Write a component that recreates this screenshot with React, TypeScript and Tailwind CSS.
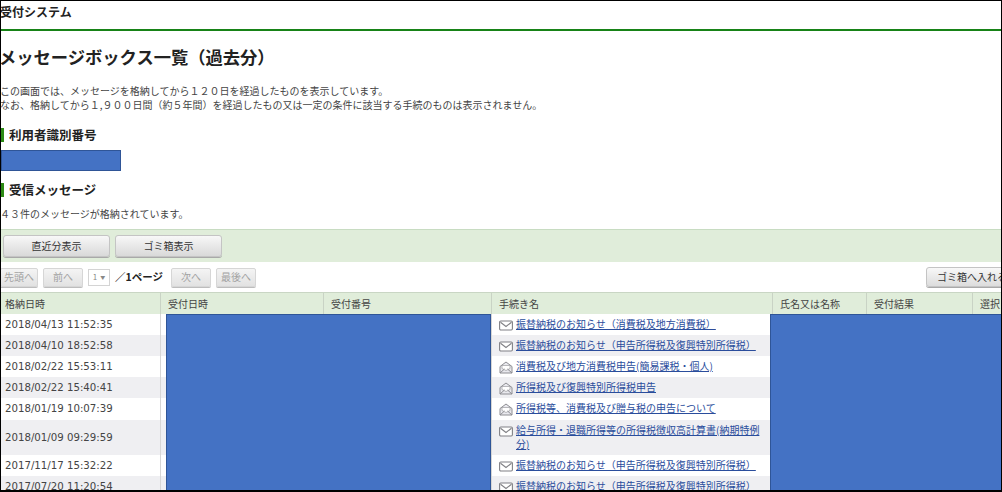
const jp = '"Noto Sans CJK JP", sans-serif';

const rows = [
  { date: "2018/04/13 11:52:35", name: "振替納税のお知らせ（消費税及地方消費税）", open: false, h: "h-[21px]" },
  { date: "2018/04/10 18:52:58", name: "振替納税のお知らせ（申告所得税及復興特別所得税）", open: false, h: "h-[21px]" },
  { date: "2018/02/22 15:53:11", name: "消費税及び地方消費税申告(簡易課税・個人)", open: true, h: "h-[21px]" },
  { date: "2018/02/22 15:40:41", name: "所得税及び復興特別所得税申告", open: true, h: "h-[21px]" },
  { date: "2018/01/19 10:07:39", name: "所得税等、消費税及び贈与税の申告について", open: true, h: "h-[22px]" },
  { date: "2018/01/09 09:29:59", name: "給与所得・退職所得等の所得税徴収高計算書(納期特例分)", open: false, h: "h-[35px]" },
  { date: "2017/11/17 15:32:22", name: "振替納税のお知らせ（申告所得税及復興特別所得税）", open: false, h: "h-[21px]" },
  { date: "2017/07/20 11:20:54", name: "振替納税のお知らせ（申告所得税及復興特別所得税）", open: false, h: "h-[21px]" },
];

function MailIcon({ open }: { open: boolean }) {
  if (open) {
    return (
      <svg width="14" height="13" viewBox="0 0 14 13" className="mt-[2px] shrink-0" fill="#e9e9ee" stroke="#8d8d92" strokeWidth="1">
        <path d="M1 5.500 7 1l6 4.500V12H1z" />
        <path d="M3 4.500h8v3L7 9.500 3 7.500z" fill="#fff" strokeWidth="0.600" />
        <path d="M1 12l4.500-4M13 12 8.500 8" />
      </svg>
    );
  }
  return (
    <svg width="14" height="11" viewBox="0 0 14 11" className="mt-[3px] shrink-0" fill="#fff" stroke="#808085" strokeWidth="1.100">
      <rect x="0.600" y="1" width="12.800" height="9" rx="1.200" />
      <path d="M1.500 2.200 7 6.500l5.500-4.300" fill="none" />
    </svg>
  );
}

function PageBtn({ label, className }: { label: string; className: string }) {
  return (
    <button className={`h-[19px] rounded-[2px] border border-[#d6d6d6] bg-gradient-to-b from-[#f4f4f4] to-[#e2e2e2] text-[10px] leading-none text-[#a2a2a2] shadow-[0_1px_0_#bdbdbd] ${className}`}>
      {label}
    </button>
  );
}

function MainBtn({ label, className }: { label: string; className: string }) {
  return (
    <button className={`h-[22px] rounded-[3px] border border-[#c4c4c4] bg-gradient-to-b from-[#f8f8f8] to-[#d9d9d9] text-[10px] leading-none text-[#333] shadow-[0_1px_0_#a9a9a9] ${className}`}>
      {label}
    </button>
  );
}

function SectionTitle({ children, className }: { children: string; className: string }) {
  return (
    <h2 className={`flex h-[14px] items-center border-l-[3px] border-[#2c8a14] pl-[5px] text-[12.500px] font-bold leading-none text-[#222] ${className}`}>
      {children}
    </h2>
  );
}

export default function App() {
  return (
    <div
      className="relative h-[492px] w-[1002px] overflow-hidden border-b-2 border-l border-r border-t border-black bg-white text-[#333]"
      style={{ fontFamily: jp }}
    >
      <header className="h-[30px] border-b-2 border-[#178317] pt-[4px]">
        <div className="-ml-px text-[12px] font-bold leading-[14px] text-[#222]">受付システム</div>
      </header>

      <h1 className="-ml-[2px] mt-[14px] text-[17.300px] font-bold leading-[24px] text-[#222]">メッセージボックス一覧（過去分）</h1>

      <p className="-ml-px mt-[15px] whitespace-nowrap text-[10px] leading-[14px] text-[#444]">
        この画面では、メッセージを格納してから１２０日を経過したものを表示しています。
        <br />
        なお、格納してから１,９００日間（約５年間）を経過したもの又は一定の条件に該当する手続のものは表示されません。
      </p>

      <SectionTitle className="mt-[16px]">利用者識別番号</SectionTitle>
      <div className="mt-[8px] h-[21px] w-[120px] border border-[#2f5597] bg-[#4472c4]" />
      <SectionTitle className="mt-[12px]">受信メッセージ</SectionTitle>
      <p className="-ml-px mt-[10px] text-[10px] leading-[14px] text-[#444]">４３件のメッセージが格納されています。</p>

      <div className="mt-[8px] flex h-[33px] items-center gap-[5px] border-t border-[#c8dcc2] bg-[#e0edda] pl-[2px]">
        <MainBtn label="直近分表示" className="w-[107px]" />
        <MainBtn label="ゴミ箱表示" className="w-[107px]" />
      </div>

      <div className="relative flex h-[30px] items-center">
        <PageBtn label="先頭へ" className="-ml-px w-[38px]" />
        <PageBtn label="前へ" className="ml-[5px] w-[40px]" />
        <div className="ml-[5px] flex h-[17px] w-[22px] items-center justify-center gap-[3px] border border-[#d4d4d4] text-[8px] text-[#888]">
          1<span className="text-[5px]">▼</span>
        </div>
        <span className="ml-[5px] w-[48px] whitespace-nowrap text-[10.500px] font-bold text-[#222]">／1ページ</span>
        <PageBtn label="次へ" className="ml-[8px] w-[40px]" />
        <PageBtn label="最後へ" className="ml-[5px] w-[40px]" />
        <button className="absolute left-[925px] top-[5px] h-[20px] w-[90px] whitespace-nowrap rounded-[3px] border border-[#c4c4c4] bg-gradient-to-b from-[#f8f8f8] to-[#dcdcdc] pl-[10px] text-left text-[10px] leading-none text-[#333] shadow-[0_1px_0_#a9a9a9]">
          ゴミ箱へ入れる
        </button>
      </div>

      <div className="relative">
        <div className="grid h-[22px] grid-cols-[160px_163px_168px_281px_94px_106px_30px] border-t border-[#c9d6c4] bg-[#e0edda] text-[10px] leading-[21px] text-[#444]">
          {["格納日時", "受付日時", "受付番号", "手続き名", "氏名又は名称", "受付結果", "選択"].map((h, i) => (
            <div key={h} className={`whitespace-nowrap border-r border-[#c9d3c5] ${i === 0 ? "pl-[4px]" : "pl-[7px]"}`}>{h}</div>
          ))}
        </div>

        {rows.map((r, i) => (
          <div key={r.date} className={`grid grid-cols-[160px_330px_285px_227px] ${r.h} ${i % 2 === 1 ? "bg-[#efeff2]" : "bg-white"}`}>
            <div className="flex items-center border-r border-[#d6d6d6] pl-[4px] text-[10.200px] leading-[14px] text-[#444]" style={{ fontFamily: '"DejaVu Sans", sans-serif' }}>
              {r.date}
            </div>
            <div />
            <div className="flex gap-[3px] border-l border-r border-[#d6d6d6] pl-[7px] pr-[8px] pt-[3px]">
              <MailIcon open={r.open} />
              <a href="#" className="text-[10px] leading-[14px] text-[#2a4d9c] underline">{r.name}</a>
            </div>
            <div />
          </div>
        ))}

        <div className="absolute left-[165px] top-[22px] h-[200px] w-[325px] border border-[#2f5597] bg-[#4472c4]" />
        <div className="absolute left-[769px] top-[22px] h-[200px] w-[240px] border border-[#2f5597] bg-[#4472c4]" />
      </div>
    </div>
  );
}
